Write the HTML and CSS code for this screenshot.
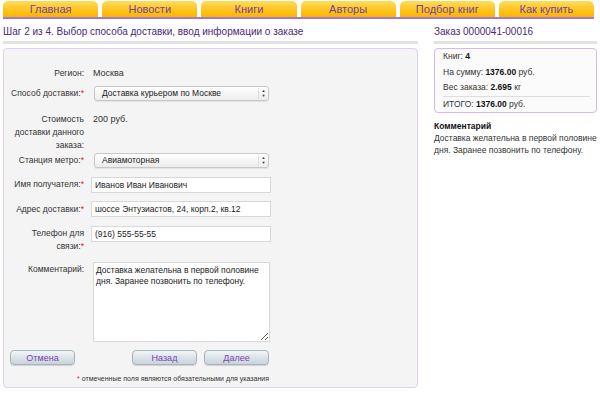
FILE: index.html
```
<!DOCTYPE html>
<html lang="ru">
<head>
    <meta charset="UTF-8">
    <title>Оформление заказа</title>
    <link rel="stylesheet" href="styles.css">
</head>
<body>
    <div class="tabs">
        <a class="tab">Главная</a>
        <a class="tab">Новости</a>
        <a class="tab">Книги</a>
        <a class="tab">Авторы</a>
        <a class="tab">Подбор книг</a>
        <a class="tab">Как купить</a>
    </div>

    <div class="page">
        <div class="main">
            <h2 class="title">Шаг 2 из 4. Выбор способа доставки, ввод информации о заказе</h2>

            <div class="panel">
                <div class="row row-first">
                    <div class="label">Регион:</div>
                    <div class="value">Москва</div>
                </div>

                <div class="row row-wide">
                    <div class="label label-select">Способ доставки:<span class="req">*</span></div>
                    <div class="select">Доставка курьером по Москве<span class="arrows">&#9650;<br>&#9660;</span></div>
                </div>

                <div class="row row-tight">
                    <div class="label">Стоимость<br>доставки данного<br>заказа:</div>
                    <div class="value">200 руб.</div>
                </div>

                <div class="row">
                    <div class="label label-select">Станция метро:<span class="req">*</span></div>
                    <div class="select">Авиамоторная<span class="arrows">&#9650;<br>&#9660;</span></div>
                </div>

                <div class="row">
                    <div class="label label-field">Имя получателя:<span class="req">*</span></div>
                    <input class="field" type="text" value="Иванов Иван Иванович">
                </div>

                <div class="row">
                    <div class="label label-field">Адрес доставки:<span class="req">*</span></div>
                    <input class="field" type="text" value="шоссе Энтузиастов, 24, корп.2, кв.12">
                </div>

                <div class="row">
                    <div class="label label-field">Телефон для<br>связи:<span class="req">*</span></div>
                    <input class="field" type="text" value="(916) 555-55-55">
                </div>

                <div class="row">
                    <div class="label label-field">Комментарий:</div>
                    <textarea class="comment">Доставка желательна в первой половине дня. Заранее позвонить по телефону.</textarea>
                </div>

                <div class="buttons">
                    <button class="btn">Отмена</button>
                    <button class="btn btn-back">Назад</button>
                    <button class="btn">Далее</button>
                </div>

                <div class="note"><span class="req">*</span> отмеченные поля являются обязательными для указания</div>
            </div>
        </div>

        <div class="side">
            <h2 class="title">Заказ 0000041-00016</h2>

            <div class="summary">
                <div class="sum-row">Книг: <b>4</b></div>
                <div class="sum-row">На сумму: <b>1376.00</b> руб.</div>
                <div class="sum-row sum-sep">Вес заказа: <b>2.695</b> кг</div>
                <div class="sum-row">ИТОГО: <b>1376.00</b> руб.</div>
            </div>

            <div class="side-comment">
                <h4>Комментарий</h4>
                <p>Доставка желательна в первой половине дня. Заранее позвонить по телефону.</p>
            </div>
        </div>
    </div>
</body>
</html>
```

FILE: styles.css
```
* {
    margin: 0;
    padding: 0;
    box-sizing: border-box;
    font-family: "Liberation Sans", Arial, sans-serif;
}

body {
    background-color: #fff;
    padding: 0 3px;
    color: #222;
}

.tabs {
    display: flex;
    gap: 4px;
    width: 591px;
    padding-top: 1px;
    border-bottom: 2px solid #a27acb;
}

.tab {
    flex: 1;
    height: 16px;
    line-height: 16px;
    text-align: center;
    font-size: 11px;
    color: #6f43a3;
    border-radius: 5px 5px 0 0;
    background: linear-gradient(#ffdc5a, #ffc21c 60%, #ffb400);
}

.page {
    display: flex;
    gap: 16px;
}

.main {
    width: 415px;
}

.side {
    width: 163px;
}

.title {
    margin-top: 6px;
    padding-bottom: 3px;
    border-bottom: 3px solid #e2e2e2;
    font-size: 10px;
    line-height: 13px;
    font-weight: normal;
    color: #4a2878;
    white-space: nowrap;
}

.panel {
    margin-top: 4px;
    padding: 18px 0 4px 0;
    background-color: #f4f4f4;
    border: 1px solid #e0cff0;
    border-radius: 4px;
    height: 340px;
}

.row {
    display: grid;
    grid-template-columns: 80px 178px;
    column-gap: 7px;
    align-items: start;
    margin-bottom: 8.5px;
    font-size: 9px;
    line-height: 13px;
}

.row-first {
    margin-bottom: 6px;
}

.row-wide {
    margin-bottom: 12px;
}

.row-tight {
    margin-bottom: 1px;
}

.label {
    text-align: right;
    font-size: 8.5px;
    white-space: nowrap;
    color: #333;
}

.label-select {
    padding-top: 1px;
}

.label-field {
    padding-top: 1.5px;
}

.value {
    padding-left: 2px;
    color: #333;
}

.req {
    color: #e0161b;
}

.select {
    position: relative;
    margin-left: 3px;
    height: 15px;
    line-height: 13px;
    padding-left: 7px;
    font-size: 8.5px;
    color: #222;
    border: 1px solid #c8c8c8;
    border-radius: 3px;
    background: linear-gradient(#ffffff, #ececec);
    box-shadow: 0 1px 1px rgba(0, 0, 0, 0.08);
}

.arrows {
    position: absolute;
    right: 0;
    top: 1px;
    width: 10px;
    height: 11px;
    border-left: 1px solid #ddd;
    font-size: 4px;
    line-height: 5px;
    text-align: center;
    color: #333;
}

.field {
    width: 180px;
    height: 16px;
    padding: 0 3px;
    font-size: 8.5px;
    color: #222;
    background-color: #fff;
    border: 1px solid #d8d8d8;
}

.comment {
    width: 177px;
    height: 80px;
    margin-left: 2px;
    padding: 2px 2px;
    font-size: 8.5px;
    line-height: 11px;
    color: #222;
    background-color: #fff;
    border: 1px solid #d8d8d8;
    resize: both;
    overflow: hidden;
}

.buttons {
    display: flex;
    gap: 7px;
    width: 265px;
    padding-left: 6px;
}

.btn {
    width: 65px;
    height: 15px;
    font-size: 9px;
    color: #7b45b0;
    border: 1px solid #a9b5bd;
    border-radius: 4px;
    background: linear-gradient(#f2f6f8, #dbe3e8 50%, #c9d4da);
    box-shadow: 0 1px 1px rgba(0, 0, 0, 0.15);
}

.btn-back {
    margin-left: auto;
}

.note {
    width: 265px;
    margin-top: 8.5px;
    text-align: right;
    font-size: 7px;
    line-height: 10px;
    color: #333;
}

.summary {
    margin-top: 4px;
    padding: 0 6px 0 8px;
    background-color: #fbfbfb;
    border: 1px solid #d2bbea;
    border-radius: 4px;
}

.sum-row {
    font-size: 8.5px;
    line-height: 15.5px;
    color: #333;
}

.sum-row b {
    color: #111;
}

.sum-sep {
    border-bottom: 1px solid #dedede;
}

.side-comment {
    margin-top: 7px;
    font-size: 8.5px;
    line-height: 12px;
    color: #333;
}

.side-comment h4 {
    font-size: 8.5px;
    color: #111;
}
```
